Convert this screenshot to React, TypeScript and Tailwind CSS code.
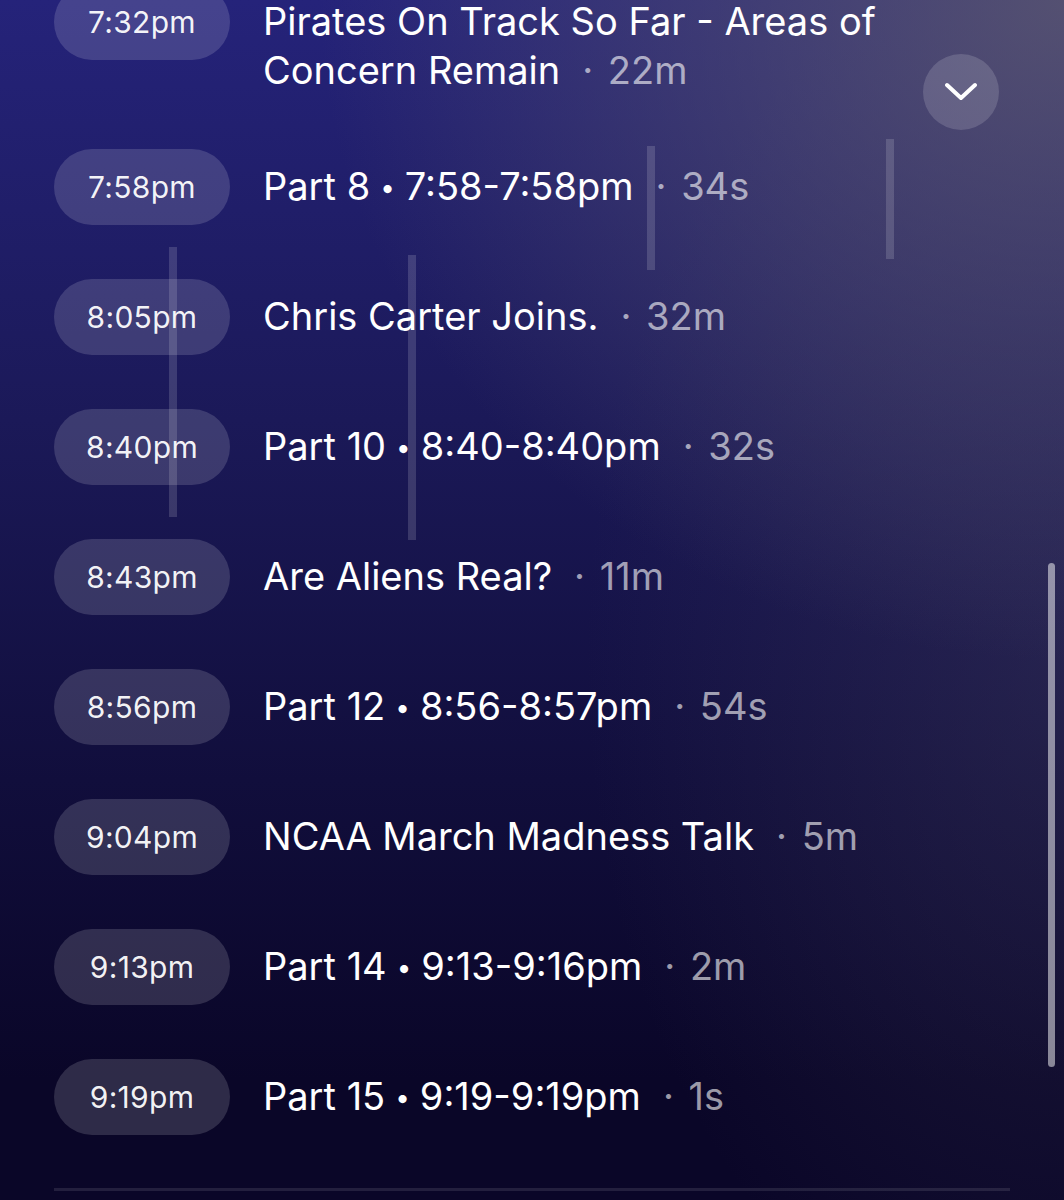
type Chapter = {
  time: string;
  title: string;
  length: string;
};

const chapters: Chapter[] = [
  { time: '7:32pm', title: 'Pirates On Track So Far - Areas of Concern Remain', length: '22m' },
  { time: '7:58pm', title: 'Part 8 • 7:58-7:58pm', length: '34s' },
  { time: '8:05pm', title: 'Chris Carter Joins.', length: '32m' },
  { time: '8:40pm', title: 'Part 10 • 8:40-8:40pm', length: '32s' },
  { time: '8:43pm', title: 'Are Aliens Real?', length: '11m' },
  { time: '8:56pm', title: 'Part 12 • 8:56-8:57pm', length: '54s' },
  { time: '9:04pm', title: 'NCAA March Madness Talk', length: '5m' },
  { time: '9:13pm', title: 'Part 14 • 9:13-9:16pm', length: '2m' },
  { time: '9:19pm', title: 'Part 15 • 9:19-9:19pm', length: '1s' },
];

function Title({ text }: { text: string }) {
  const parts = text.split(' • ');
  if (parts.length === 1) return <>{text}</>;
  return (
    <>
      {parts[0]}
      <span className="mx-[10px] align-[3px] text-[26px] leading-none">•</span>
      {parts[1]}
    </>
  );
}

function ChapterRow({ chapter }: { chapter: Chapter }) {
  return (
    <div className="flex items-start gap-[33px]">
      <div className="flex h-[76px] w-[176px] shrink-0 items-center justify-center rounded-full bg-white/15 text-[30px] tracking-[0.3px] text-white/95">
        {chapter.time}
      </div>
      <p className="max-w-[680px] pt-[13px] text-[38px] leading-[49px] text-white">
        <Title text={chapter.title} />
        <span className="ml-[22px] whitespace-nowrap text-white/60 [word-spacing:4px]">{`· ${chapter.length}`}</span>
      </p>
    </div>
  );
}

export default function App() {
  return (
    <div
      className="relative h-[1200px] w-[1064px] overflow-hidden bg-[radial-gradient(ellipse_70%_55%_at_100%_0%,rgba(92,88,112,0.85),rgba(92,88,112,0)_100%),radial-gradient(ellipse_45%_60%_at_100%_55%,rgba(70,66,96,0.35),rgba(70,66,96,0)_100%),linear-gradient(180deg,#25237a_0%,#1b1958_35%,#110e3c_65%,#0a0628_90%)]"
      style={{ fontFamily: 'Inter, "Noto Sans", sans-serif' }}
    >
      {/* chapter list */}
      <div className="-mt-4 flex flex-col gap-[54px] pl-[54px]">
        {chapters.map((c) => (
          <ChapterRow key={c.time} chapter={c} />
        ))}
      </div>

      <div className="ml-[54px] mt-[53px] h-[3px] w-[956px] bg-white/10" />

      {/* stray overlay bars */}
      <div className="absolute left-[169px] top-[247px] h-[270px] w-[8px] bg-white/15" />
      <div className="absolute left-[408px] top-[255px] h-[285px] w-[8px] bg-white/15" />
      <div className="absolute left-[647px] top-[146px] h-[124px] w-[8px] bg-white/15" />
      <div className="absolute left-[886px] top-[139px] h-[120px] w-[8px] bg-white/15" />

      {/* jump to latest */}
      <button className="absolute left-[923px] top-[54px] flex h-[76px] w-[76px] items-center justify-center rounded-full bg-white/15">
        <svg width="32" height="20" viewBox="0 0 32 20" fill="none">
          <path d="M2 3 L16 16 L30 3" stroke="white" strokeWidth="4" strokeLinecap="round" strokeLinejoin="round" />
        </svg>
      </button>

      {/* scrollbar */}
      <div className="absolute left-[1048px] top-[563px] h-[504px] w-[7px] rounded-full bg-white/50" />
    </div>
  );
}
